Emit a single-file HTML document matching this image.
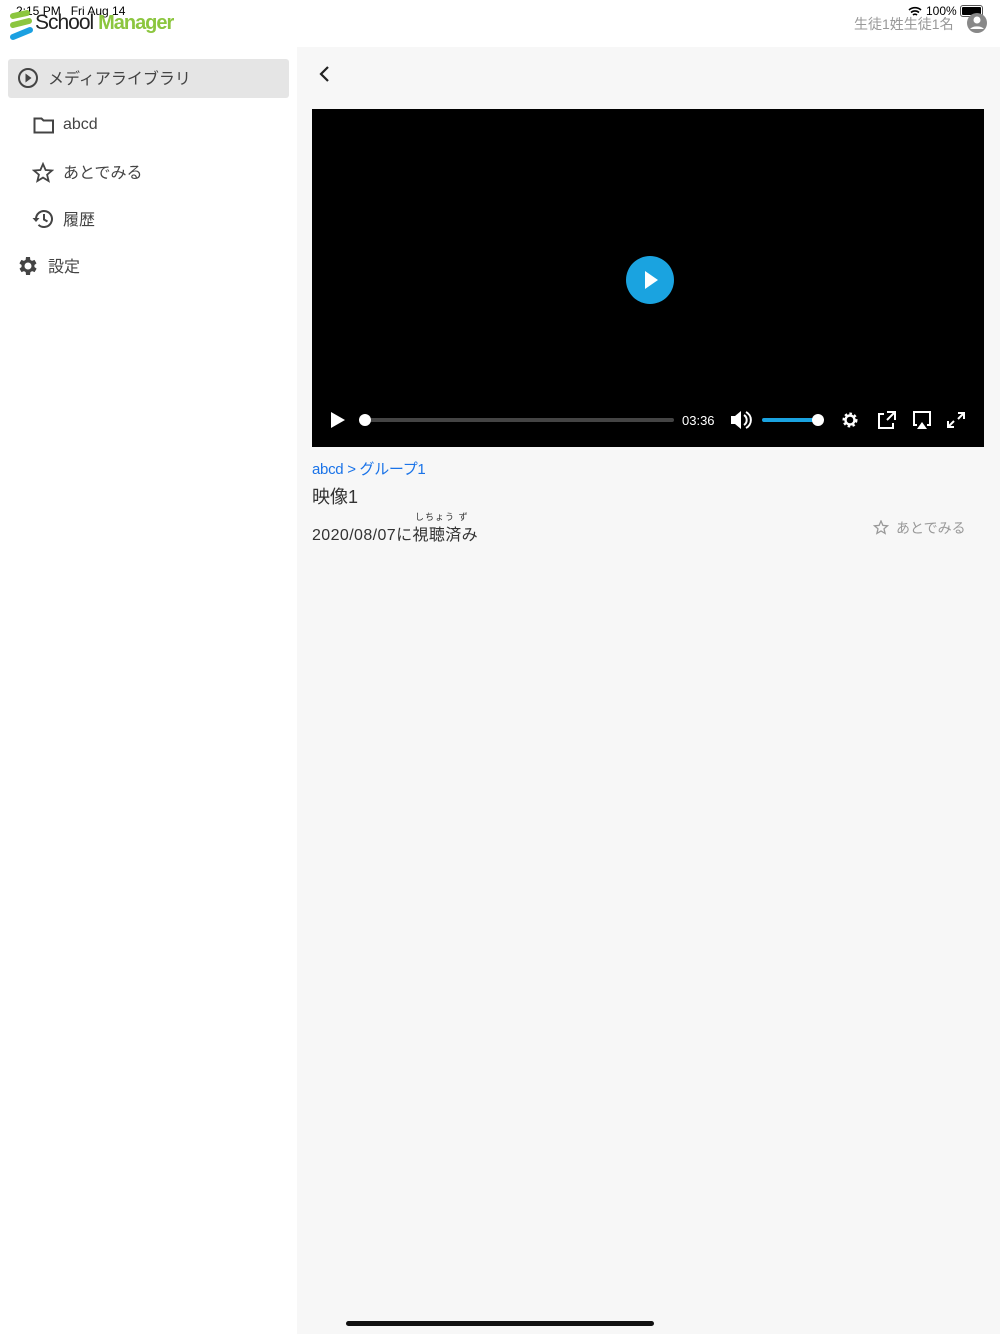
<!DOCTYPE html>
<html><head><meta charset="utf-8"><style>
*{margin:0;padding:0;box-sizing:border-box}
body{width:1000px;height:1334px;background:#fff;font-family:"Liberation Sans","Noto Sans CJK JP",sans-serif;position:relative;overflow:hidden;color:#333}
.abs{position:absolute}
.main{left:297px;top:47px;width:703px;height:1287px;background:#f7f7f7}
.nav{font-size:16px;color:#444;line-height:20px}
</style></head><body>
<div class="abs" style="left:16px;top:4px;font-size:12px;color:#000">2:15 PM&nbsp;&nbsp;&nbsp;Fri Aug 14</div>
<svg class="abs" style="left:8px;top:10px" width="26" height="32"><g stroke-linecap="round" stroke-width="6"><line x1="5" y1="6" x2="19" y2="3" stroke="#8cc63f"/><line x1="5" y1="15" x2="21" y2="11" stroke="#8cc63f"/><line x1="5" y1="27" x2="22" y2="20" stroke="#1ba0e1"/></g></svg>
<div class="abs" style="left:35px;top:11px;font-size:21px;letter-spacing:-1px"><span style="color:#222">School</span> <span style="color:#8cc63f;font-weight:bold;font-size:20px">Manager</span></div>
<div class="abs" style="left:926px;top:4px;font-size:12px;color:#000">100%</div>
<svg class="abs" style="left:908px;top:6px" width="14" height="11"><path d="M1 4a9 9 0 0 1 12 0M3 6.5a6 6 0 0 1 8 0M5 9a3 3 0 0 1 4 0" stroke="#000" stroke-width="1.6" fill="none"/></svg>
<div class="abs" style="left:960px;top:5px;width:23px;height:12px;border:1px solid #555;border-radius:3px;padding:1px"><div style="background:#000;width:100%;height:100%;border-radius:1px"></div></div>
<div class="abs" style="left:854px;top:14px;font-size:14px;color:#999">生徒1姓生徒1名</div>
<svg class="abs" style="left:966px;top:12px" width="22" height="22"><circle cx="11" cy="11" r="10" fill="#888"/><circle cx="11" cy="8" r="3.5" fill="#fff"/><path d="M4 17a8 5 0 0 1 14 0" fill="#fff"/></svg>

<div class="abs" style="left:8px;top:59px;width:281px;height:39px;background:#e5e5e5;border-radius:3px"></div>
<svg class="abs" style="left:17px;top:67px" width="22" height="22"><circle cx="11" cy="11" r="9" fill="none" stroke="#444" stroke-width="2"/><path d="M8.5 6.5l6 4.5-6 4.5z" fill="#444"/></svg>
<div class="abs nav" style="left:48px;top:70px">メディアライブラリ</div>
<svg class="abs" style="left:33px;top:115px" width="22" height="20"><path d="M1.5 3.5h7l2 2h9.5v12h-18.5z" fill="none" stroke="#444" stroke-width="2"/></svg>
<div class="abs nav" style="left:63px;top:115px">abcd</div>
<svg class="abs" style="left:32px;top:162px" width="22" height="22"><path d="M11 2l2.6 6 6.4.5-4.9 4.2 1.5 6.3-5.6-3.4-5.6 3.4 1.5-6.3L2 8.5l6.4-.5z" fill="none" stroke="#444" stroke-width="1.8"/></svg>
<div class="abs nav" style="left:63px;top:164px">あとでみる</div>
<svg class="abs" style="left:32px;top:208px" width="22" height="22"><path d="M4 11a8 8 0 1 1 2.5 5.8" fill="none" stroke="#444" stroke-width="2"/><path d="M0.5 10h7l-3.5 4z" fill="#444"/><path d="M12 6v5.5l3.5 2" fill="none" stroke="#444" stroke-width="2"/></svg>
<div class="abs nav" style="left:63px;top:211px">履歴</div>
<svg class="abs" style="left:16px;top:254px" width="24" height="24" viewBox="0 0 24 24"><path fill="#444" d="M19.4 13a7.5 7.5 0 0 0 0-2l2.1-1.6-2-3.5-2.5 1a7.6 7.6 0 0 0-1.7-1L15 3h-4l-.4 2.9a7.6 7.6 0 0 0-1.7 1l-2.5-1-2 3.5L6.6 11a7.5 7.5 0 0 0 0 2l-2.1 1.6 2 3.5 2.5-1a7.6 7.6 0 0 0 1.7 1L11 21h4l.4-2.9a7.6 7.6 0 0 0 1.7-1l2.5 1 2-3.5zM13 15.5a3.5 3.5 0 1 1 0-7 3.5 3.5 0 0 1 0 7z" transform="translate(-1 0)"/></svg>
<div class="abs nav" style="left:48px;top:258px">設定</div>

<div class="abs main"></div>
<svg class="abs" style="left:316px;top:65px" width="16" height="18"><path d="M12 2L5 9l7 7" fill="none" stroke="#222" stroke-width="2.2"/></svg>

<div class="abs" style="left:312px;top:109px;width:672px;height:338px;background:#000"></div>
<svg class="abs" style="left:626px;top:256px" width="48" height="48"><circle cx="24" cy="24" r="24" fill="#1aa3e0"/><path d="M19 15l13 9-13 9z" fill="#fff"/></svg>
<svg class="abs" style="left:312px;top:400px" width="672" height="40">
<path d="M19 12l14 8-14 8z" fill="#fff"/>
<rect x="52" y="18" width="310" height="4" rx="2" fill="#444"/>
<circle cx="53" cy="20" r="6" fill="#fff"/>
<text x="370" y="25" font-family="Liberation Sans" font-size="13" fill="#fff">03:36</text>
<path d="M419 16h4l6-5v18l-6-5h-4z" fill="#fff"/><path d="M432 15a6 6 0 0 1 0 10M434 12a9 9 0 0 1 0 16" stroke="#fff" stroke-width="2" fill="none"/>
<rect x="450" y="18" width="56" height="4" rx="2" fill="#1aa3e0"/><circle cx="506" cy="20" r="6" fill="#fff"/>
<g transform="translate(530,12)"><circle cx="8" cy="8" r="5.5" fill="none" stroke="#fff" stroke-width="4" stroke-dasharray="2.2 2"/><circle cx="8" cy="8" r="4.5" fill="none" stroke="#fff" stroke-width="2.4"/></g>
<path d="M572 14h-5v14h14v-5M575 12h8v8M583 12l-8 8" stroke="#fff" stroke-width="2" fill="none"/>
<path d="M605 25h-3V12h16v13h-3" stroke="#fff" stroke-width="2" fill="none"/><path d="M610 22l5 7h-10z" fill="#fff"/>
<path d="M646 13h6v6M652 13l-6 6M642 27h-6v-6M636 27l6-6" stroke="#fff" stroke-width="2" fill="none"/>
</svg>

<div class="abs" style="left:312px;top:458px;font-size:15px;color:#1a73e8;letter-spacing:-0.3px">abcd &gt; グループ1</div>
<div class="abs" style="left:312px;top:483px;font-size:18px;color:#333">映像1</div>
<div class="abs" style="left:415px;top:510px;font-size:9px;color:#333;letter-spacing:1px">しちょう ず</div>
<div class="abs" style="left:312px;top:521px;font-size:16px;color:#333;letter-spacing:0.4px">2020/08/07に視聴済み</div>
<svg class="abs" style="left:873px;top:520px" width="16" height="16"><path d="M8 1l1.9 4.4 4.6.4-3.5 3 1.1 4.6L8 11 3.9 13.4 5 8.8 1.5 5.8l4.6-.4z" fill="none" stroke="#999" stroke-width="1.3"/></svg>
<div class="abs" style="left:896px;top:518px;font-size:14px;color:#999">あとでみる</div>
<div class="abs" style="left:346px;top:1321px;width:308px;height:5px;background:#111;border-radius:3px"></div>
</body></html>
